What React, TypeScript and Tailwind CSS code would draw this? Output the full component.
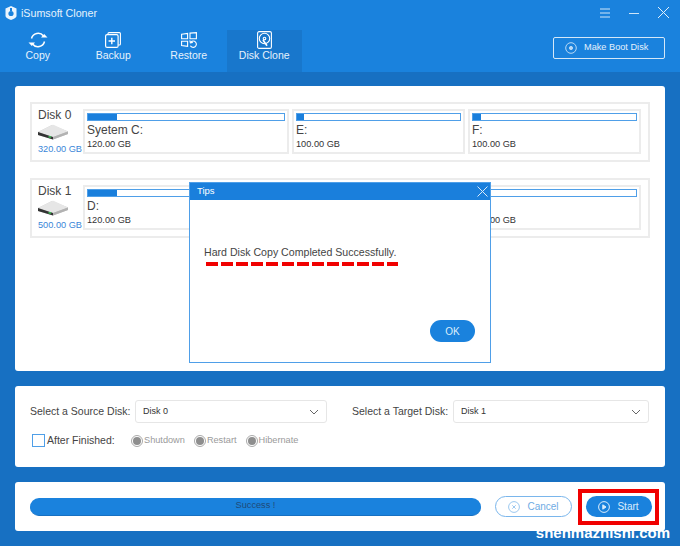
import React from 'react';

const HddIcon = () => (
    <svg width="30" height="16" viewBox="0 0 30 16">
        <path d="M0 8 L14 1 L30 7.5 L30 10 L15 15.5 L0 11 Z" fill="#c4c4c4" />
        <path d="M0 8 L14 1 Q15 0.6 16 1 L30 7.5 L15 13 Z" fill="#e6e6e6" />
        <path d="M0 8 L15 13 L15 15.5 L0 11 Z" fill="#333" />
        <path d="M15 13 L30 7.5 L30 10 L15 15.5 Z" fill="#b2b2b2" />
        <rect x="10.5" y="12.2" width="2.6" height="1.4" fill="#3ecf5a" />
    </svg>
);

interface PartitionProps {
    name: string;
    size: string;
    used: number;
    className: string;
}

const Partition: React.FC<PartitionProps> = ({ name, size, used, className }) => (
    <div className={`border-2 border-[#ececec] h-[45px] px-[2px] pt-[2px] ${className}`}>
        <div className="h-[8px] border border-[#4f9fe8] bg-white">
            <div className="h-full bg-[#1a7fdc]" style={{ width: `${used}%` }} />
        </div>
        <div className="text-[12px] leading-[14px] mt-[2px] text-[#444]">{name}</div>
        <div className="text-[9.2px] leading-[12px] mt-[1px] text-[#333]">{size}</div>
    </div>
);

interface DiskRowProps {
    title: string;
    total: string;
    parts: { name: string; size: string; used: number; className: string }[];
}

const DiskRow: React.FC<DiskRowProps> = ({ title, total, parts }) => (
    <div className="h-[60px] border-2 border-[#ececec] flex pl-[6px] pr-[7px] pt-[4px]">
        <div className="w-[45px] shrink-0">
            <div className="text-[12px] leading-[14px] text-[#444]">{title}</div>
            <div className="mt-[2px]"><HddIcon /></div>
            <div className="text-[9.2px] leading-[12px] mt-[3px] text-[#3a86d8] whitespace-nowrap">{total}</div>
        </div>
        <div className="flex gap-[3px] mt-[1px]">
            {parts.map((p) => (
                <Partition key={p.name} {...p} />
            ))}
        </div>
    </div>
);

const Radio = ({ label }: { label: string }) => (
    <div className="flex items-center text-[9.2px] text-[#9a9a9a]">
        <span className="w-[12px] h-[12px] rounded-full border border-[#aaa] flex items-center justify-center">
            <span className="w-[8px] h-[8px] rounded-full bg-[#8e8e8e]" />
        </span>
        <span className="ml-[1px]">{label}</span>
    </div>
);

const Select = ({ value, className }: { value: string; className: string }) => (
    <div className={`h-[23px] border border-[#e6e6e6] rounded-[3px] flex items-center justify-between pl-[7px] pr-[7px] text-[9px] text-[#333] ${className}`}>
        <span>{value}</span>
        <svg width="10" height="6" viewBox="0 0 10 6" fill="none" stroke="#666" strokeWidth="1">
            <path d="M1 1 L5 5 L9 1" />
        </svg>
    </div>
);

const tabs = [
    {
        label: 'Copy',
        icon: (
            <svg width="20" height="18" viewBox="0 0 20 18" fill="none" stroke="currentColor" strokeWidth="1.5">
                <path d="M3.5 7.5 A6.8 6.8 0 0 1 15.5 5" />
                <path d="M16.5 10.5 A6.8 6.8 0 0 1 4.5 13" />
                <path d="M13 6.5 L19.5 6.5 L16.2 3 Z" fill="currentColor" stroke="none" />
                <path d="M0.5 11.5 L7 11.5 L3.8 15 Z" fill="currentColor" stroke="none" />
            </svg>
        ),
    },
    {
        label: 'Backup',
        icon: (
            <svg width="16" height="16" viewBox="0 0 16 16" fill="none" stroke="currentColor" strokeWidth="1.1">
                <rect x="0.6" y="2.6" width="12.5" height="12.8" rx="1.5" strokeWidth="1.2" />
                <path d="M3 2.5 L3 1.6 Q3 0.6 4 0.6 L14.4 0.6 Q15.4 0.6 15.4 1.6 L15.4 12 Q15.4 13 14.4 13 L13.2 13" />
                <path d="M6.8 5.8 L6.8 12.2 M3.6 9 L10 9" strokeWidth="1.4" />
            </svg>
        ),
    },
    {
        label: 'Restore',
        icon: (
            <svg width="16" height="16" viewBox="0 0 16 16" fill="none" stroke="currentColor" strokeWidth="1.1">
                <path d="M0.6 2.2 L6.6 1.4 L6.6 6.8 L0.6 6.8 Z" />
                <path d="M9 1.1 L15.4 0.6 L15.4 6.8 L9 6.8 Z" />
                <path d="M0.6 9.2 L6.6 9.2 L6.6 14.4 L0.6 13.6 Z" />
                <path d="M9.4 13.8 A3.2 3.2 0 1 0 9.8 10 M8.8 8.4 L9.4 10.8 L11.8 10.4" />
            </svg>
        ),
    },
    {
        label: 'Disk Clone',
        icon: (
            <svg width="15" height="18" viewBox="0 0 15 18" fill="none" stroke="currentColor" strokeWidth="1.1">
                <rect x="0.6" y="0.6" width="13.8" height="16.8" rx="1.5" />
                <circle cx="7.5" cy="7.5" r="5.2" />
                <circle cx="7.5" cy="7.5" r="1.3" />
                <path d="M6 9 L10 14.8" strokeWidth="1.6" />
            </svg>
        ),
    },
];

const App: React.FC = () => {
    return (
        <div className="w-[680px] h-[546px] bg-[#1770c2] overflow-hidden relative font-['Liberation_Sans',Arial,sans-serif]">
            {/* header */}
            <div className="h-[72px] bg-[#1a82dd] text-white">
                <div className="h-[30px] flex items-start">
                    <svg width="12" height="14" viewBox="0 0 12 14" className="ml-[5px] mt-[6px]">
                        <path d="M6 0 L11.5 2.5 L11.5 10 Q11.5 12 6 14 Q0.5 12 0.5 10 L0.5 2.5 Z" fill="#eaf4fd" />
                        <circle cx="6" cy="7.5" r="2.6" fill="#1a82dd" />
                        <rect x="5" y="2" width="2" height="3" fill="#1a82dd" />
                    </svg>
                    <span className="ml-[4px] mt-[7px] text-[10.7px] leading-[13px] text-[#e6f2fc]">iSumsoft Cloner</span>
                    <div className="ml-auto flex items-center mr-[11px] mt-[7px] gap-[19px]">
                        <svg width="10" height="10" viewBox="0 0 10 10" stroke="#cfe5f8" strokeWidth="1">
                            <path d="M0 1 H10 M0 5 H10 M0 9 H10" />
                        </svg>
                        <svg width="10" height="10" viewBox="0 0 10 10" stroke="#cfe5f8" strokeWidth="1">
                            <path d="M0 5.5 H10" />
                        </svg>
                        <svg width="11" height="11" viewBox="0 0 11 11" stroke="#e2f0fb" strokeWidth="1">
                            <path d="M0 0 L11 11 M11 0 L0 11" />
                        </svg>
                    </div>
                </div>
                <div className="flex h-[42px] relative">
                    {tabs.map((t) => (
                        <div
                            key={t.label}
                            className={`w-[75.5px] flex flex-col items-center ${t.label === 'Disk Clone' ? 'bg-[#1770c2]/60' : ''}`}
                        >
                            <div className="h-[17px] mt-[1px] flex items-center">{t.icon}</div>
                            <div className="text-[10.5px] leading-[14px] text-[#e6f2fc] whitespace-nowrap">{t.label}</div>
                        </div>
                    ))}
                    <div className="ml-auto mr-[15px] mt-[7px] w-[112px] h-[22px] border border-[#d5e8f8] rounded-[2px] flex items-center pl-[11px] text-[#e3f0fc] text-[9.2px]">
                        <svg width="12" height="12" viewBox="0 0 12 12" fill="none" stroke="#b9d9f5" strokeWidth="1" className="mr-[7px]">
                            <circle cx="6" cy="6" r="5.3" />
                            <circle cx="6" cy="6" r="1.6" fill="#b9d9f5" />
                        </svg>
                        <span className="whitespace-nowrap">Make Boot Disk</span>
                    </div>
                </div>
            </div>

            {/* disks */}
            <div className="px-[15px] pt-[14px]">
                <div className="h-[285px] bg-white rounded-[3px] px-[15px] pt-[16px] flex flex-col gap-[16px]">
                    <DiskRow
                        title="Disk 0"
                        total="320.00 GB"
                        parts={[
                            { name: 'Syetem C:', size: '120.00 GB', used: 15, className: 'w-[206px]' },
                            { name: 'E:', size: '100.00 GB', used: 4, className: 'w-[173px]' },
                            { name: 'F:', size: '100.00 GB', used: 5, className: 'w-[173px]' },
                        ]}
                    />
                    <DiskRow
                        title="Disk 1"
                        total="500.00 GB"
                        parts={[
                            { name: 'D:', size: '120.00 GB', used: 15, className: 'w-[206px]' },
                            { name: 'E:', size: '100.00 GB', used: 4, className: 'w-[173px]' },
                            { name: 'F:', size: '100.00 GB', used: 5, className: 'w-[173px]' },
                        ]}
                    />
                </div>

                {/* source and target */}
                <div className="h-[81px] mt-[15px] bg-white rounded-[3px] pt-[14px] pl-[15px] pr-[16px]">
                    <div className="flex items-center text-[#444] text-[10.5px] leading-[23px]">
                        <span className="w-[105px] whitespace-nowrap">Select a Source Disk:</span>
                        <Select value="Disk 0" className="w-[192px]" />
                        <span className="ml-[25px] w-[101px] whitespace-nowrap">Select a Target Disk:</span>
                        <Select value="Disk 1" className="ml-auto w-[196px]" />
                    </div>
                    <div className="flex items-center mt-[10px] ml-[2px]">
                        <span className="w-[13px] h-[13px] border border-[#4f9fe8]" />
                        <span className="ml-[2px] w-[84px] text-[10.5px] text-[#444]">After Finished:</span>
                        <div className="flex gap-[9px]">
                            <Radio label="Shutdown" />
                            <Radio label="Restart" />
                            <Radio label="Hibernate" />
                        </div>
                    </div>
                </div>

                {/* progress */}
                <div className="h-[49px] mt-[15px] bg-white rounded-[3px] flex items-center pl-[15px] pr-[6px]">
                    <div className="w-[451px] shrink-0 h-[18px] rounded-full bg-[#1a82dd] border-b border-[#1770c2] flex items-center justify-center text-[9.2px] text-[#1f4a78]">
                        Success !
                    </div>
                    <div className="ml-[14px] w-[77px] shrink-0 h-[21px] rounded-full border border-[#7ab6ec] flex items-center justify-center text-[10px] text-[#6fabe4]">
                        <svg width="12" height="12" viewBox="0 0 12 12" fill="none" stroke="#9cc8ef" strokeWidth="1" className="mr-[7px]">
                            <circle cx="6" cy="6" r="5.4" />
                            <path d="M4.3 4.3 L7.7 7.7 M7.7 4.3 L4.3 7.7" />
                        </svg>
                        Cancel
                    </div>
                    <div className="ml-[6px] shrink-0 border-[4px] border-[#f00000] w-[81px] h-[36px] flex items-center justify-center">
                        <div className="w-[66px] h-[21px] rounded-full bg-[#1a82dd] flex items-center justify-center text-[10px] text-[#dcedfb]">
                            <svg width="12" height="12" viewBox="0 0 12 12" fill="none" stroke="#dcedfb" strokeWidth="1" className="mr-[7px]">
                                <circle cx="6" cy="6" r="5.4" />
                                <path d="M4.8 3.8 L8 6 L4.8 8.2 Z" fill="#dcedfb" />
                            </svg>
                            Start
                        </div>
                    </div>
                </div>
            </div>

            {/* tips dialog */}
            <div className="absolute left-[189px] top-[182px] w-[302px] h-[181px] bg-white border border-[#4f9fe8] flex flex-col">
                <div className="h-[17px] bg-[#1a7fdc] flex items-center justify-between pl-[7px] pr-[2px] text-white text-[9.5px]">
                    <span>Tips</span>
                    <svg width="11" height="11" viewBox="0 0 11 11" stroke="#d8eafa" strokeWidth="1">
                        <path d="M0.5 0.5 L10.5 10.5 M10.5 0.5 L0.5 10.5" />
                    </svg>
                </div>
                <div className="pl-[14px] pt-[46px] text-[10.6px] leading-[13px] text-[#444]">Hard Disk Copy Completed Successfully.</div>
                <div className="ml-[16px] mt-[3px] w-[192px] h-[4px] bg-[repeating-linear-gradient(90deg,#f00000_0,#f00000_12px,transparent_12px,transparent_15.1px)]" />
                <div className="mt-auto mb-[20px] ml-auto mr-[15px] w-[45px] h-[22px] rounded-full bg-[#1a82dd] text-[#dcedfb] text-[10px] flex items-center justify-center">OK</div>
            </div>

            {/* watermark */}
            <div className="absolute right-[10px] bottom-[5px] text-white font-bold text-[15px] leading-[16px]">shenmazhishi.com</div>
        </div>
    );
};

export default App;
